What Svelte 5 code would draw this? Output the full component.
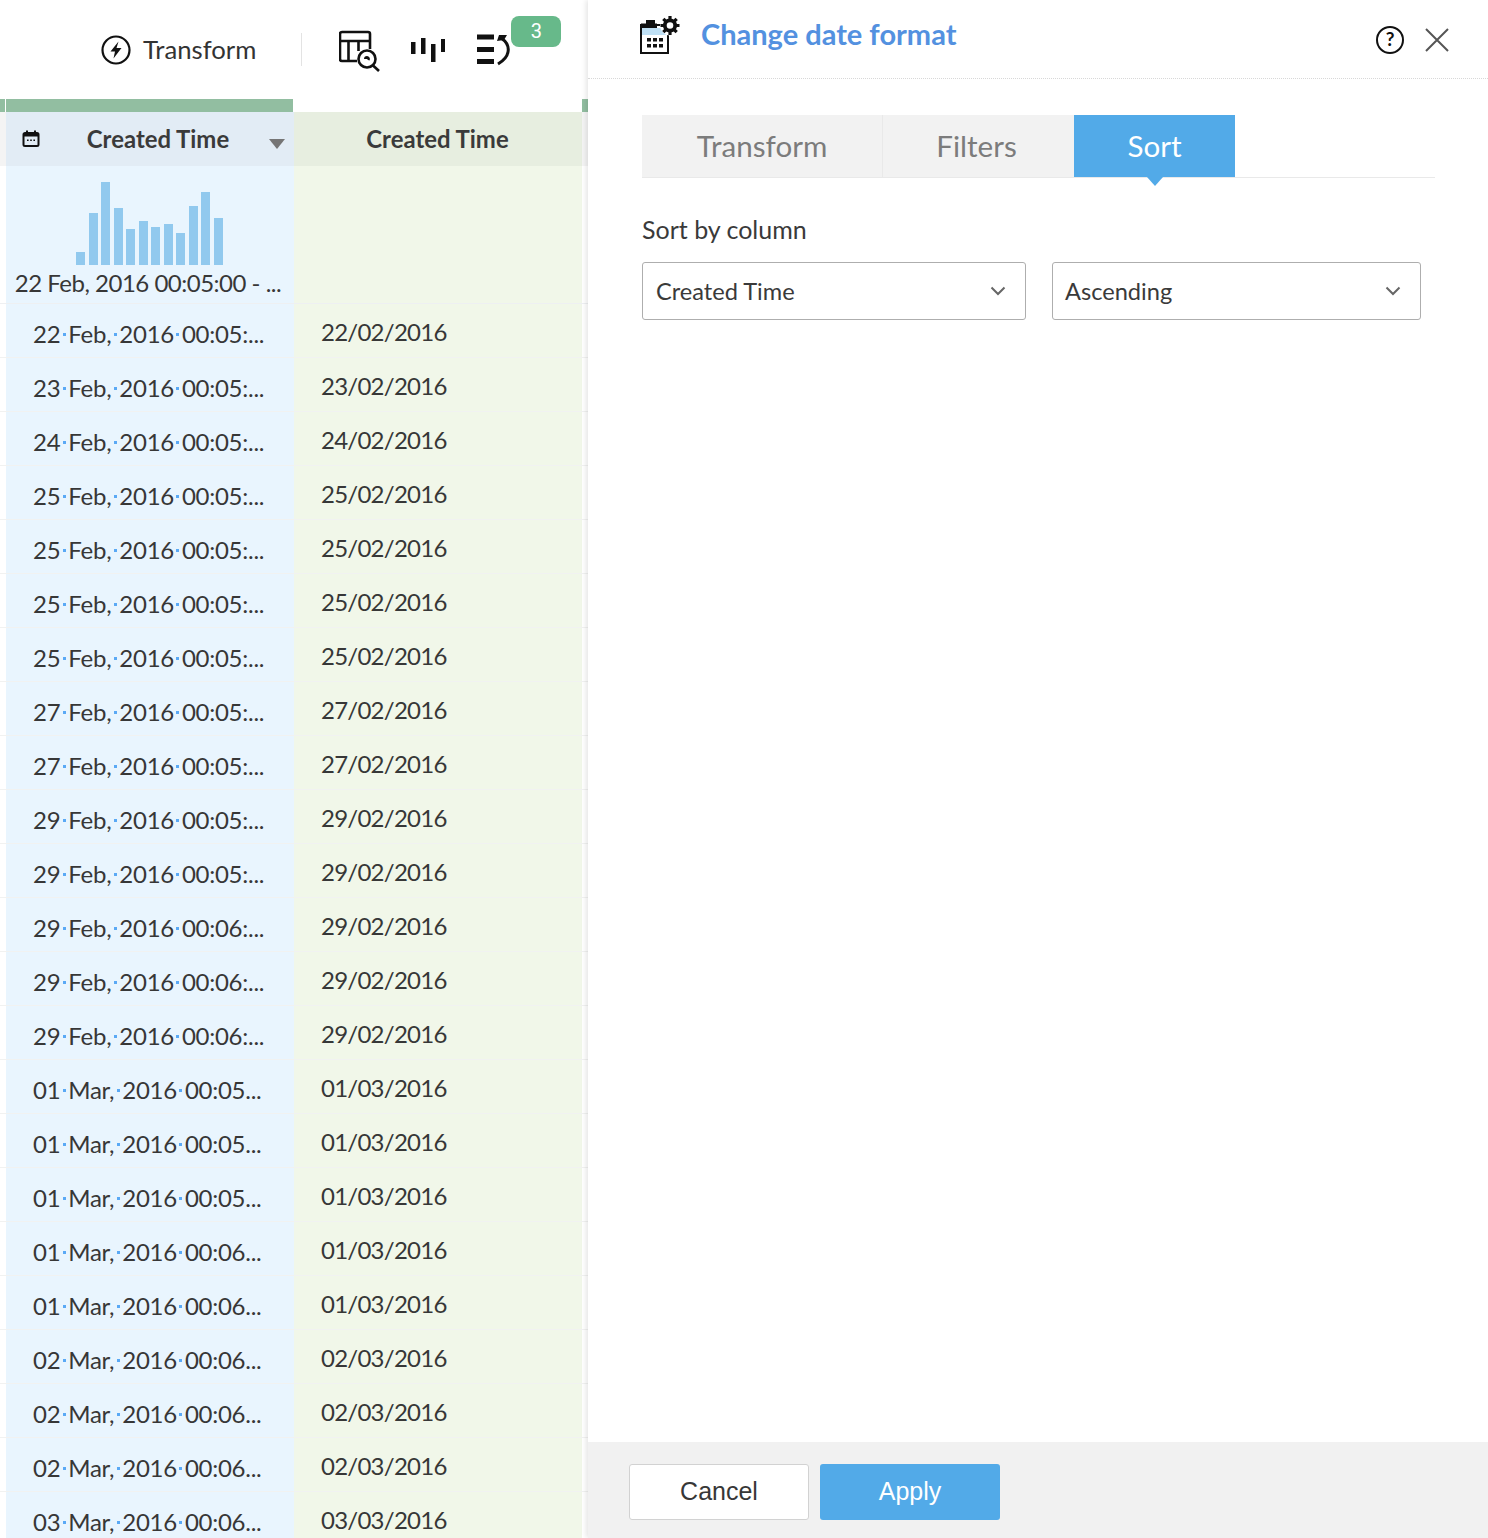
<script>
  const bars = [13, 52, 83, 57, 36, 44, 38, 41, 32, 59, 73, 47];
  const rows = [
    ['22', 'Feb', '00:05:...', '22/02/2016'],
    ['23', 'Feb', '00:05:...', '23/02/2016'],
    ['24', 'Feb', '00:05:...', '24/02/2016'],
    ['25', 'Feb', '00:05:...', '25/02/2016'],
    ['25', 'Feb', '00:05:...', '25/02/2016'],
    ['25', 'Feb', '00:05:...', '25/02/2016'],
    ['25', 'Feb', '00:05:...', '25/02/2016'],
    ['27', 'Feb', '00:05:...', '27/02/2016'],
    ['27', 'Feb', '00:05:...', '27/02/2016'],
    ['29', 'Feb', '00:05:...', '29/02/2016'],
    ['29', 'Feb', '00:05:...', '29/02/2016'],
    ['29', 'Feb', '00:06:...', '29/02/2016'],
    ['29', 'Feb', '00:06:...', '29/02/2016'],
    ['29', 'Feb', '00:06:...', '29/02/2016'],
    ['01', 'Mar', '00:05...', '01/03/2016'],
    ['01', 'Mar', '00:05...', '01/03/2016'],
    ['01', 'Mar', '00:05...', '01/03/2016'],
    ['01', 'Mar', '00:06...', '01/03/2016'],
    ['01', 'Mar', '00:06...', '01/03/2016'],
    ['02', 'Mar', '00:06...', '02/03/2016'],
    ['02', 'Mar', '00:06...', '02/03/2016'],
    ['02', 'Mar', '00:06...', '02/03/2016'],
    ['03', 'Mar', '00:06...', '03/03/2016']
  ];
</script>

<div class="page">
  <section class="left">
    <div class="toolbar">
      <svg class="bolt" width="30" height="30" viewBox="0 0 30 30" fill="none">
        <circle cx="15" cy="15" r="13.500" stroke="#111" stroke-width="2.200" />
        <path d="M17.500 6.500 9.500 16.500h4.500L12.500 23.500l8-10.500H15.500z" fill="#111" />
      </svg>
      <span class="tool-label">Transform</span>
      <span class="sep"></span>
      <svg class="ico-table" width="42" height="42" viewBox="0 0 42 42" fill="none" stroke="#111" stroke-width="2.600">
        <path d="M18 31H3a2 2 0 0 1-2-2V4a2 2 0 0 1 2-2h26a2 2 0 0 1 2 2v15" />
        <path d="M1 11H31M9.500 11V31M19.500 11V21" />
        <circle cx="28" cy="29" r="8.500" />
        <path d="m34 35.500 6 5.500" />
        <path d="M25 29a3 3 0 0 1 3-3 3 3 0 0 1 2.500 4.500 3 3 0 0 1-2.500-1.500z" fill="#111" stroke="none" />
      </svg>
      <svg class="ico-bars" width="34" height="26" viewBox="0 0 34 26" fill="#111">
        <rect x="0" y="6" width="4.500" height="12" />
        <rect x="10" y="2" width="4.500" height="16" />
        <rect x="20" y="8" width="4.500" height="18" />
        <rect x="30" y="3" width="4" height="13" />
      </svg>
      <div class="undo">
        <svg width="34" height="32" viewBox="0 0 34 32" fill="none">
          <path d="M0 3h17M0 15.500h17M0 27.500h17" stroke="#111" stroke-width="5" />
          <path d="M24 4C30 8 32 13 31 18 30 24 26 27 21 30" stroke="#111" stroke-width="3" />
          <path d="M20 7 22 1H30L27 6Z" fill="#111" />
        </svg>
        <span class="badge">3</span>
      </div>
    </div>

    <div class="bar"><i class="g1"></i><i class="g2"></i><i class="g3"></i></div>

    <div class="head">
      <div class="hcell hc1">
        <svg class="cal" width="18" height="18" viewBox="0 0 18 18">
          <path d="M3 3h12a1.500 1.500 0 0 1 1.500 1.500v10A1.500 1.500 0 0 1 15 16H3a1.500 1.500 0 0 1-1.500-1.500v-10A1.500 1.500 0 0 1 3 3z" fill="none" stroke="#111" stroke-width="2" />
          <path d="M2 3h14v3.500H2zM4 .500h2v3H4zM12 .500h2v3h-2zM5 9.500h1.600v1.600H5zM8.200 9.500h1.600v1.600H8.200zM11.400 9.500H13v1.600h-1.600z" fill="#111" />
        </svg>
        <span class="htext shifted">Created Time</span>
        <span class="caret"></span>
      </div>
      <div class="hcell hc2"><span class="htext">Created Time</span></div>
    </div>

    <div class="hist">
      <div class="hc1 histcol">
        <div class="bars">
          {#each bars as h}
            <i style="height:{h}px"></i>
          {/each}
        </div>
        <div class="range">22 Feb, 2016 00:05:00 - ...</div>
      </div>
      <div class="hc2 histempty"></div>
    </div>

    {#each rows as r}
      <div class="row">
        <div class="cell c1">{r[0]}<b> </b>{r[1]},<b> </b>2016<b> </b>{r[2]}</div>
        <div class="cell c2">{r[3]}</div>
      </div>
    {/each}
  </section>

  <section class="panel">
    <header class="phead">
      <svg class="pico" width="40" height="38" viewBox="0 0 40 38">
        <path d="M1 9h27v28H1z" fill="#fff" stroke="#111" stroke-width="2" />
        <path d="M2 12h20l5 7H2z" fill="#bfe0f5" />
        <path d="M1 7.500h16V12H1zM6 4h9v4H6z" fill="#111" />
        <path d="M7 22h4v3.500H7zM13 22h4v3.500h-4zM19 22h4v3.500h-4zM7 28h4v3.500H7zM13 28h4v3.500h-4zM19 28h4v3.500h-4z" fill="#111" />
        <circle cx="30" cy="9.500" r="10" fill="#fff" />
        <circle cx="30" cy="9.500" r="5.200" fill="none" stroke="#111" stroke-width="3.800" />
        <path d="M30 0V4M30 15V19M20.500 9.500H24.500M35.500 9.500H39.500M23.300 2.800 26 5.500M36.700 2.800 34 5.500M23.300 16.200 26 13.500M36.700 16.200 34 13.500" stroke="#111" stroke-width="3.200" />
      </svg>
      <h1>Change date format</h1>
      <svg class="help" width="30" height="30" viewBox="0 0 30 30" fill="none">
        <circle cx="15" cy="15" r="13" stroke="#111" stroke-width="2" />
        <text x="15" y="21" text-anchor="middle" class="qm">?</text>
      </svg>
      <svg class="close" width="24" height="24" viewBox="0 0 24 24">
        <path d="M1 1 23 23M23 1 1 23" stroke="#555" stroke-width="2" />
      </svg>
    </header>

    <div class="pbody">
      <nav class="tabs">
        <div class="tab t1">Transform</div>
        <div class="tab t2">Filters</div>
        <div class="tab t3">Sort</div>
      </nav>
      <label class="lab" for="col">Sort by column</label>
      <div class="selects">
        <div class="sel s1" id="col">
          <span>Created Time</span>
          <svg width="16" height="10" viewBox="0 0 16 10"><path d="M1.500 1.500 8 8l6.500-6.500" fill="none" stroke="#666" stroke-width="2" /></svg>
        </div>
        <div class="sel s2">
          <span>Ascending</span>
          <svg width="16" height="10" viewBox="0 0 16 10"><path d="M1.500 1.500 8 8l6.500-6.500" fill="none" stroke="#666" stroke-width="2" /></svg>
        </div>
      </div>
    </div>

    <footer class="foot">
      <button class="btn cancel">Cancel</button>
      <button class="btn apply">Apply</button>
    </footer>
  </section>
</div>

<style>
  :global(body) { margin: 0; background: #fff; }
  .page {
    display: flex;
    width: 1488px;
    height: 1538px;
    overflow: hidden;
    font-family: Lato, "Liberation Sans", sans-serif;
    color: #373737;
  }
  .left { width: 588px; flex: none; overflow: hidden; }
  .toolbar {
    height: 99px;
    display: flex;
    align-items: center;
    padding-left: 101px;
    box-sizing: border-box;
  }
  .tool-label { font-size: 25.700px; line-height: 32px; margin: -2px 0 0 12px; color: #333; }
  .sep { width: 1px; height: 33px; background: #e3e3e3; margin-left: 45px; }
  .ico-table { margin-left: 37px; margin-top: 3px; }
  .ico-bars { margin-left: 30px; margin-top: -1px; }
  .undo { position: relative; margin-left: 32px; margin-top: 1px; display: flex; }
  .badge {
    position: absolute;
    left: 34px;
    top: -18px;
    width: 50px;
    height: 31px;
    border-radius: 8px;
    background: #67b98a;
    color: #fff;
    font: 20px/31px Roboto, sans-serif;
    text-align: center;
  }
  .bar { display: flex; height: 13px; }
  .bar i { display: block; height: 100%; background: #92bea1; }
  .g1 { width: 5px; margin-right: 1px; }
  .g2 { width: 287px; }
  .g3 { width: 6px; margin-left: auto; }
  .head { display: flex; height: 54px; padding-left: 6px; background: #f4f4f4; }
  .hcell { display: flex; align-items: center; justify-content: center; position: relative; }
  .head .hc1 { background: #e2ecf5; }
  .head .hc2 { background: #e7eee0; }
  .hc1 { width: 288px; flex: none; box-sizing: border-box; }
  .hc2 { width: 288px; flex: none; box-sizing: border-box; }
  .htext { font-size: 23.900px; font-weight: 700; color: #3a3a3a; margin-top: -2px; }
  .hc2 .htext { margin-left: -1px; }
  .shifted { margin-left: 16px; }
  .cal { position: absolute; left: 16px; top: 18px; }
  .caret {
    position: absolute;
    left: 263px;
    top: 27px;
    border: 8px solid transparent;
    border-top: 10px solid #757575;
    border-bottom: 0;
  }
  .hist { display: flex; padding-left: 6px; border-bottom: 1px solid #eef0f2; height: 137px; }
  .histcol { background: #e9f5fe; display: flex; flex-direction: column; align-items: center; }
  .histempty { background: #f1f7e9; }
  .bars { display: flex; align-items: flex-end; gap: 3.500px; height: 99px; margin-left: -1px; }
  .bars i { display: block; width: 9px; background: #91c9ee; }
  .range { font-size: 24px; line-height: 36px; letter-spacing: -0.500px; white-space: nowrap; margin-left: -4px; }
  .row { display: flex; height: 54px; padding-left: 6px; box-sizing: border-box; border-bottom: 1px solid #f1f2f1; }
  .cell { box-sizing: border-box; white-space: nowrap; font-size: 24px; line-height: 36px; }
  .c1 { width: 288px; background: #e9f5fe; padding: 12px 0 0 27px; letter-spacing: -0.270px; }
  .c2 { width: 288px; background: #f1f7e9; padding: 10px 0 0 27px; letter-spacing: -0.750px; }
  .c1 b {
    display: inline-block;
    width: 3px;
    height: 3px;
    margin: 0 2.500px;
    background: #5aa9f5;
    font-size: 0;
    vertical-align: 7px;
  }

  .panel {
    flex: 1;
    display: flex;
    flex-direction: column;
    box-shadow: -2px 0 5px rgba(0, 0, 0, 0.1);
    position: relative;
    background: #fff;
  }
  .phead {
    height: 79px;
    box-sizing: border-box;
    display: flex;
    align-items: center;
    padding: 0 39px 0 52px;
    border-bottom: 1px dotted #d8d8d8;
  }
  .pico { margin-top: -8px; flex: none; overflow: visible; }
  h1 { margin: -11px 0 0 21px; font-size: 29px; font-weight: 700; color: #5391e0; flex: 1; }
  .qm { font: 700 19px Lato, sans-serif; fill: #111; }
  .help { margin-top: 2px; }
  .close { margin: 2px 0 0 20px; }
  .pbody { flex: 1; padding: 36px 53px 0 54px; }
  .tabs { display: flex; height: 63px; box-sizing: border-box; border-bottom: 1px solid #e9e9e9; }
  .tab { display: flex; align-items: center; justify-content: center; font-size: 29.600px; background: #f2f2f2; color: #7c7c7c; height: 62px; padding-bottom: 2px; box-sizing: border-box; }
  .t1 { width: 241px; border-right: 1px solid #e9e9e9; }
  .t2 { width: 191px; padding-right: 4px; }
  .t3 { width: 161px; background: #52aae8; color: #fff; position: relative; }
  .t3::after {
    content: "";
    position: absolute;
    left: 73px;
    top: 100%;
    border: 8px solid transparent;
    border-top: 9px solid #52aae8;
    border-bottom: 0;
  }
  .lab { display: block; margin-top: 33px; font-size: 25px; line-height: 36px; color: #3a3a3a; }
  .selects { display: flex; gap: 26px; margin-top: 15px; }
  .sel {
    height: 58px;
    box-sizing: border-box;
    border: 1px solid #aeaeae;
    border-radius: 3px;
    display: flex;
    align-items: center;
    justify-content: space-between;
    font-size: 23.600px;
    color: #3a3a3a;
  }
  .s1 { width: 384px; padding: 0 19px 0 13px; }
  .s2 { width: 369px; padding: 0 19px 0 12px; }
  .foot {
    height: 96px;
    box-sizing: border-box;
    background: #f1f1f1;
    display: flex;
    align-items: center;
    gap: 11px;
    padding: 4px 0 0 41px;
  }
  .btn {
    width: 180px;
    height: 56px;
    border-radius: 3px;
    font: 25px "Liberation Sans", Arial, sans-serif;
    box-sizing: border-box;
    padding: 0 0 2px;
  }
  .cancel { background: #fff; border: 1px solid #d2d2d2; color: #373737; }
  .apply { background: #52aae8; border: 0; color: #fff; }
</style>
